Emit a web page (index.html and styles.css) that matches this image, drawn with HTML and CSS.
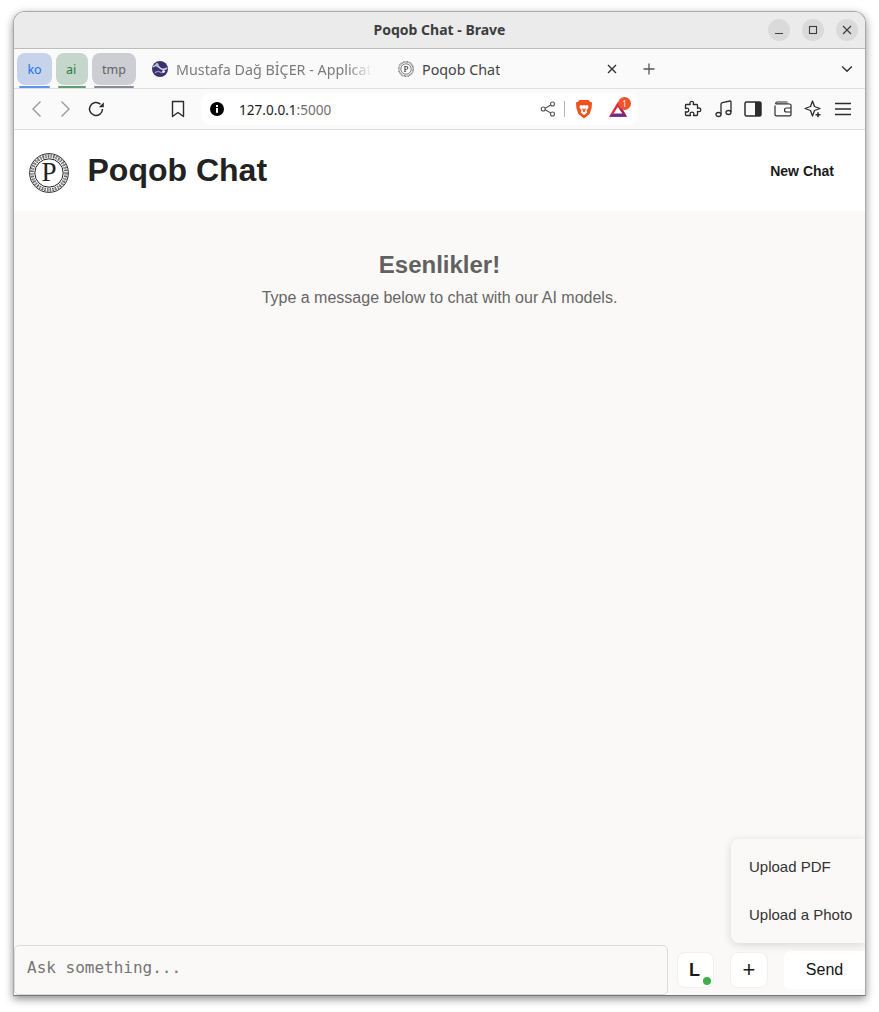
FILE: index.html
```html
<!DOCTYPE html>
<html lang="en">
<head>
<meta charset="utf-8">
<title>Poqob Chat - Brave</title>
<link rel="stylesheet" href="styles.css">
</head>
<body>
<div class="window">
  <div class="titlebar">
    <span class="title">Poqob Chat - Brave</span>
    <div class="win-controls">
      <span class="win-btn"><svg width="10" height="10" viewBox="0 0 10 10"><path d="M1 8.500h8" stroke="#3d3d3d" stroke-width="1.200"/></svg></span>
      <span class="win-btn"><svg width="10" height="10" viewBox="0 0 10 10"><rect x="1.500" y="1.500" width="7" height="7" fill="none" stroke="#3d3d3d" stroke-width="1.100"/></svg></span>
      <span class="win-btn"><svg width="10" height="10" viewBox="0 0 10 10"><path d="M1 1l8 8M9 1l-8 8" stroke="#3d3d3d" stroke-width="1.200"/></svg></span>
    </div>
  </div>

  <div class="tabstrip">
    <div class="group group-ko">ko</div>
    <div class="group group-ai">ai</div>
    <div class="group group-tmp">tmp</div>
    <div class="tab tab-first">
      <svg class="favicon" width="16" height="16" viewBox="0 0 16 16"><circle cx="8" cy="8" r="8" fill="#3a3268"/><path d="M1 6c3-3 5-1 7 1s4 2 7 0" stroke="#c9cfe8" stroke-width="1.600" fill="none"/><path d="M3 12c2-2 4-2 5-1s3 1 5-1" stroke="#8f8bd0" stroke-width="1.400" fill="none"/><circle cx="5" cy="3.500" r="1.600" fill="#b9bde0"/><circle cx="11.500" cy="10.500" r="1.300" fill="#ffffff"/></svg>
      <span class="tab-label faded">Mustafa Dağ BİÇER - Applicat</span>
    </div>
    <div class="tab tab-second">
      <svg class="favicon" width="16" height="16" viewBox="0 0 40 40"><circle cx="20" cy="20" r="18" fill="none" stroke="#666" stroke-width="4" stroke-dasharray="2 1.500"/><circle cx="20" cy="20" r="13" fill="#fff" stroke="#222" stroke-width="1.500"/><text x="20" y="28" class="fav-p">P</text></svg>
      <span class="tab-label">Poqob Chat</span>
      <svg class="tab-close" width="10" height="10" viewBox="0 0 10 10"><path d="M1 1l8 8M9 1l-8 8" stroke="#333" stroke-width="1.400"/></svg>
    </div>
    <svg class="new-tab" width="12" height="12" viewBox="0 0 12 12"><path d="M6 .5v11M.5 6h11" stroke="#555" stroke-width="1.300"/></svg>
    <svg class="tab-menu" width="12" height="8" viewBox="0 0 12 8"><path d="M1.200 1.500L6 6.200l4.800-4.700" fill="none" stroke="#333" stroke-width="1.500"/></svg>
  </div>

  <div class="toolbar">
    <svg class="tool back" width="12" height="18" viewBox="0 0 12 18"><path d="M10.500 1.500L3 9l7.500 7.500" fill="none" stroke="#9a9a9a" stroke-width="1.400"/></svg>
    <svg class="tool forward" width="12" height="18" viewBox="0 0 12 18"><path d="M1.500 1.500L9 9l-7.500 7.500" fill="none" stroke="#9a9a9a" stroke-width="1.400"/></svg>
    <svg class="tool reload" width="18" height="18" viewBox="0 0 18 18"><path d="M15.500 9a6.500 6.500 0 1 1-2-4.700" fill="none" stroke="#2c2c2c" stroke-width="1.500"/><path d="M16.800 2.200v5h-5z" fill="#2c2c2c"/></svg>
    <svg class="tool bookmark" width="14" height="18" viewBox="0 0 14 18"><path d="M1.500 1.500h11v15L7 12.500l-5.500 4z" fill="none" stroke="#2c2c2c" stroke-width="1.400" stroke-linejoin="round"/></svg>
    <div class="urlbar">
      <svg class="info" width="14" height="14" viewBox="0 0 14 14"><circle cx="7" cy="7" r="7" fill="#000"/><rect x="6" y="6" width="2" height="4.800" fill="#fff"/><rect x="6" y="3" width="2" height="2" fill="#fff"/></svg>
      <span class="url"><span class="host">127.0.0.1</span>:5000</span>
      <svg class="share" width="16" height="16" viewBox="0 0 16 16"><path d="M4 8l7.500-4.500M4 8l7.500 4.500" stroke="#555" stroke-width="1.100"/><circle cx="3.200" cy="8" r="2" fill="#fff" stroke="#555" stroke-width="1.100"/><circle cx="12.500" cy="3" r="2" fill="#fff" stroke="#555" stroke-width="1.100"/><circle cx="12.500" cy="13" r="2" fill="#fff" stroke="#555" stroke-width="1.100"/></svg>
      <span class="sep"></span>
      <svg class="brave" width="16" height="19" viewBox="0 0 16 19"><path d="M3.500 0h9l1.500 1.800 2 .7-.4 5.500-2 6L8 18.500 2.400 14l-2-6L0 2.500l2-.7z" fill="#f1511b"/><path d="M4 5l2.500.6L8 5l1.500.6L12 5l.5 2.500-2 3 .8 2L8 15l-3.300-2.500.8-2-2-3z" fill="#fff"/><path d="M6 8.500h1.300L8 10l.7-1.500H10L8.800 11.800 8 12.500l-.8-.7z" fill="#f1511b"/></svg>
      <div class="bat">
        <svg width="18" height="17" viewBox="0 0 20 17"><path d="M10 0L0 16.500h20z" fill="#e0263a"/><path d="M0 16.500l5-3.500h10l5 3.500z" fill="#662d91"/><path d="M10 5.500L15 13H5z" fill="#fff"/><path d="M15 13L10 5.500V0l10 16.500z" fill="#9e1f63"/></svg>
        <span class="badge">1</span>
      </div>
    </div>
    <svg class="tool puzzle" width="18" height="18" viewBox="0 0 18 18"><path d="M6 2.800C6 .8 9.500.8 9.500 2.800c0 .8-.3 1.200-.3 1.700h3.600c.5 0 .7.200.7.700v3.200c.5 0 1-.4 1.800-.4 2 0 2 3.700 0 3.700-.8 0-1.300-.4-1.800-.4v3.500c0 .5-.2.700-.7.700H9.500c0-.6.400-1 .4-1.800 0-2-3.800-2-3.800 0 0 .8.400 1.200.4 1.800H2.300c-.5 0-.8-.3-.8-.8v-3.100c.6 0 1 .4 1.800.4 2 0 2-3.900 0-3.900-.8 0-1.200.4-1.800.4V5.200c0-.4.300-.7.700-.7h3.900c0-.5-.1-.9-.1-1.700z" fill="none" stroke="#2c2c2c" stroke-width="1.300" stroke-linejoin="round"/></svg>
    <svg class="tool music" width="18" height="18" viewBox="0 0 18 18"><path d="M6 14.500V4.500c0-1 .5-1.600 1.400-1.800L15 1c.6-.1 1 .2 1 .8V12" fill="none" stroke="#2c2c2c" stroke-width="1.300"/><ellipse cx="3.500" cy="14.500" rx="2.500" ry="2" fill="none" stroke="#2c2c2c" stroke-width="1.300"/><ellipse cx="13.500" cy="12.500" rx="2.500" ry="2" fill="none" stroke="#2c2c2c" stroke-width="1.300"/></svg>
    <svg class="tool sidebar" width="18" height="16" viewBox="0 0 18 16"><rect x="1" y="1" width="16" height="14" rx="1.500" fill="none" stroke="#2c2c2c" stroke-width="1.500"/><rect x="11" y="1" width="6" height="14" fill="#2c2c2c"/></svg>
    <svg class="tool wallet" width="18" height="16" viewBox="0 0 18 16"><path d="M2.500 2.800h12M1 4.500v9c0 .8.600 1.400 1.400 1.400h13.200c.8 0 1.400-.6 1.400-1.400v-9c0-.8-.6-1.500-1.400-1.500H2.500C1.600 3 1 1.500 3 1h10.500" fill="none" stroke="#2c2c2c" stroke-width="1.200"/><path d="M17 7h-4.500a2 2 0 0 0 0 4H17" fill="none" stroke="#2c2c2c" stroke-width="1.200"/></svg>
    <svg class="tool star" width="18" height="18" viewBox="0 0 18 18"><path d="M8.500 1L10.500 6.500 16 8.500 10.500 10.500 8.500 16 6.500 10.500 1 8.500 6.500 6.500z" fill="none" stroke="#2c2c2c" stroke-width="1.300" stroke-linejoin="round"/><path d="M14 11.500v6M11 14.500h6" stroke="#fafafa" stroke-width="4"/><path d="M14 12.300v5M11.500 14.800h5" stroke="#2c2c2c" stroke-width="1.500"/></svg>
    <svg class="tool menu" width="16" height="14" viewBox="0 0 16 14"><path d="M0 1.500h16M0 7h16M0 12.500h16" stroke="#2c2c2c" stroke-width="1.300"/></svg>
  </div>

  <div class="page">
    <header class="app-header">
      <svg class="logo" width="40" height="40" viewBox="0 0 40 40">
        <circle cx="20" cy="20" r="19.400" fill="#fff" stroke="#333" stroke-width="1"/>
        <circle cx="20" cy="20" r="17.000" fill="none" stroke="#666" stroke-width="3.600" stroke-dasharray="1.600 1.100"/>
        <circle cx="20" cy="20" r="17.000" fill="none" stroke="#aaa" stroke-width="1.200" stroke-dasharray="3 2"/>
        <circle cx="20" cy="20" r="14.200" fill="#fff" stroke="#222" stroke-width="1"/>
        <text x="20" y="28" class="logo-p">P</text>
      </svg>
      <h1 class="app-title">Poqob Chat</h1>
      <button class="new-chat">New Chat</button>
    </header>

    <main class="chat">
      <h2 class="greeting">Esenlikler!</h2>
      <p class="hint">Type a message below to chat with our AI models.</p>
    </main>

    <div class="upload-menu">
      <div class="upload-item">Upload PDF</div>
      <div class="upload-item">Upload a Photo</div>
    </div>

    <footer class="composer">
      <textarea class="ask" placeholder="Ask something..."></textarea>
      <div class="model-btn">L<span class="status"></span></div>
      <div class="plus-btn">+</div>
      <div class="send-btn">Send</div>
    </footer>
  </div>
</div>
</body>
</html>
```
FILE: styles.css
```css
* { box-sizing: border-box; }
html, body { margin: 0; height: 100%; }
body {
  background: #fff;
  padding: 11px 13px 16px;
  font-family: "Liberation Sans", Arial, sans-serif;
  overflow: hidden;
}
.window {
  width: 853px;
  height: 985px;
  border: 1px solid #a8a8a8;
  border-bottom-color: #777;
  border-radius: 12px 12px 0 0;
  box-shadow: 0 3px 8px rgba(0,0,0,.45);
  display: flex;
  flex-direction: column;
  overflow: hidden;
  background: #fff;
}

/* title bar */
.titlebar {
  height: 37px;
  flex: none;
  background: #ebebeb;
  border-bottom: 1px solid #bdbdbd;
  display: flex;
  align-items: center;
  justify-content: center;
  position: relative;
}
.title {
  font: 700 14px "Noto Sans", sans-serif;
  color: #3d3d3d;
  margin-top: -1px;
}
.win-controls {
  position: absolute;
  right: 7px;
  top: 7px;
  display: flex;
  gap: 12px;
}
.win-btn {
  width: 22px;
  height: 22px;
  border-radius: 50%;
  background: #dadada;
  display: flex;
  align-items: center;
  justify-content: center;
}

/* tab strip */
.tabstrip {
  height: 40px;
  flex: none;
  background: #fafafa;
  border-bottom: 1px solid #dedede;
  display: flex;
  align-items: flex-start;
  padding: 4px 0 0 3px;
  font: 400 14.300px "Noto Sans", sans-serif;
}
.group {
  height: 32px;
  border-radius: 8px;
  display: flex;
  align-items: center;
  justify-content: center;
  font-size: 12.500px;
  margin-right: 4px;
  position: relative;
}
.group::after {
  content: "";
  position: absolute;
  left: 2px;
  right: 2px;
  bottom: -3px;
  height: 2px;
  border-radius: 1px;
}
.group-ko { width: 35px; background: #c6d3ea; color: #1a73e8; }
.group-ko::after { background: #5c95ee; }
.group-ai { width: 32px; background: #c5d6cd; color: #1e7e3a; padding-right: 2px; }
.group-ai::after { background: #5b9f70; }
.group-tmp { width: 44px; background: #cdced3; color: #5f6368; }
.group-tmp::after { background: #8a8a90; }
.tab {
  display: flex;
  align-items: center;
  height: 32px;
  color: #444;
}
.tab-first { margin-left: 12px; width: 246px; color: #7b7b7b; }
.tab-second { width: 224px; }
.favicon { flex: none; margin-right: 8px; }
.fav-p { font: 400 22px "Liberation Serif", serif; text-anchor: middle; fill: #111; }
.tab-label { white-space: nowrap; overflow: hidden; }
.faded {
  width: 196px;
  -webkit-mask-image: linear-gradient(to right, #000 88%, transparent);
  mask-image: linear-gradient(to right, #000 88%, transparent);
}
.tab-close { margin-left: auto; margin-right: 5px; flex: none; }
.new-tab { margin: 10px 0 0 21px; flex: none; }
.tab-menu { margin: 12px 0 0 186px; flex: none; }

/* toolbar */
.toolbar {
  height: 41px;
  flex: none;
  background: #fafafa;
  border-bottom: 1px solid #dedede;
  display: flex;
  align-items: center;
  padding-left: 16px;
}
.tool { flex: none; }
.forward { margin-left: 18px; }
.reload { margin-left: 15px; }
.bookmark { margin-left: 66px; }
.urlbar {
  width: 437px;
  height: 32px;
  margin-left: 16px;
  background: #fff;
  border-radius: 10px;
  display: flex;
  align-items: center;
  padding-left: 9px;
  flex: none;
}
.info { flex: none; }
.url {
  margin-left: 15px;
  width: 303px;
  font: 400 13.600px "Noto Sans", sans-serif;
  color: #6f6f6f;
}
.host { color: #1c1c1c; }
.share { flex: none; margin-left: -2px; }
.sep { width: 1px; height: 16px; background: #b5b5b5; margin: 0 11px 0 8px; flex: none; }
.brave { flex: none; }
.bat { position: relative; margin-left: 17px; height: 17px; flex: none; }
.bat svg { display: block; }
.badge {
  position: absolute;
  top: -4px;
  right: -4px;
  width: 13px;
  height: 13px;
  border-radius: 50%;
  background: #f1512b;
  color: #fff;
  font: 400 8px/13px "Noto Sans", sans-serif;
  text-align: center;
}
.puzzle { margin-left: 46px; }
.music { margin-left: 13px; }
.sidebar { margin-left: 11px; }
.wallet { margin-left: 12px; }
.star { margin-left: 12px; }
.menu { margin-left: 13px; }

/* page */
.page {
  flex: 1;
  display: flex;
  flex-direction: column;
  background: #fbf9f7;
  position: relative;
  min-height: 0;
}
.app-header {
  height: 81px;
  flex: none;
  background: #fff;
  display: flex;
  align-items: center;
  padding: 0 31px 0 15px;
}
.logo { flex: none; margin-top: 4px; }
.logo-p { font: 400 27px "Liberation Serif", serif; text-anchor: middle; fill: #222; }
.app-title {
  margin: 0 0 0 18.500px;
  font-size: 32px;
  font-weight: 700;
  color: #222;
}
.new-chat {
  margin-left: auto;
  border: 0;
  background: none;
  padding: 0;
  font: 700 14px "Liberation Sans", Arial, sans-serif;
  color: #1a1a1a;
}
.chat {
  flex: 1;
  text-align: center;
  padding-top: 40px;
  min-height: 0;
}
.greeting {
  margin: 0;
  font-size: 24px;
  line-height: 28px;
  font-weight: 700;
  color: #616161;
}
.hint {
  margin: 8px 0 0;
  font-size: 16px;
  line-height: 22px;
  color: #666;
}
.upload-menu {
  position: absolute;
  right: 0;
  bottom: 52px;
  width: 134px;
  height: 104px;
  background: #fbf9f7;
  border-radius: 8px 0 0 8px;
  box-shadow: 0 2px 10px rgba(0,0,0,.14);
  display: flex;
  flex-direction: column;
  padding: 3px 0 5px 18px;
  font-size: 15px;
  color: #333;
}
.upload-item {
  height: 48px;
  display: flex;
  align-items: center;
  white-space: nowrap;
}
.composer {
  height: 50px;
  flex: none;
  display: flex;
  align-items: center;
}
.ask {
  width: 654px;
  height: 50px;
  flex: none;
  border: 1px solid #dcdad8;
  border-radius: 5px;
  background: #fbf9f7;
  padding: 12px 12px;
  font: 400 16px/20px "DejaVu Sans Mono", monospace;
  resize: none;
  outline: 0;
}
.ask::placeholder { color: #757575; opacity: 1; }
.model-btn, .plus-btn {
  height: 36px;
  background: #fff;
  border: 1px solid #f1efed;
  border-radius: 8px;
  display: flex;
  align-items: center;
  justify-content: center;
  flex: none;
  color: #1a1a1a;
  position: relative;
}
.model-btn { width: 37px; margin-left: 9px; padding-right: 2px; font-size: 18px; font-weight: 700; }
.plus-btn { width: 38px; margin-left: 16px; font-size: 22px; }
.status {
  position: absolute;
  right: 2px;
  bottom: 2px;
  width: 8px;
  height: 8px;
  border-radius: 50%;
  background: #3fae4c;
}
.send-btn {
  width: 81px;
  height: 38px;
  margin-left: 16px;
  background: #fff;
  border-radius: 6px 0 0 6px;
  font-size: 16px;
  color: #111;
  display: flex;
  align-items: center;
  justify-content: center;
  flex: none;
}
```
